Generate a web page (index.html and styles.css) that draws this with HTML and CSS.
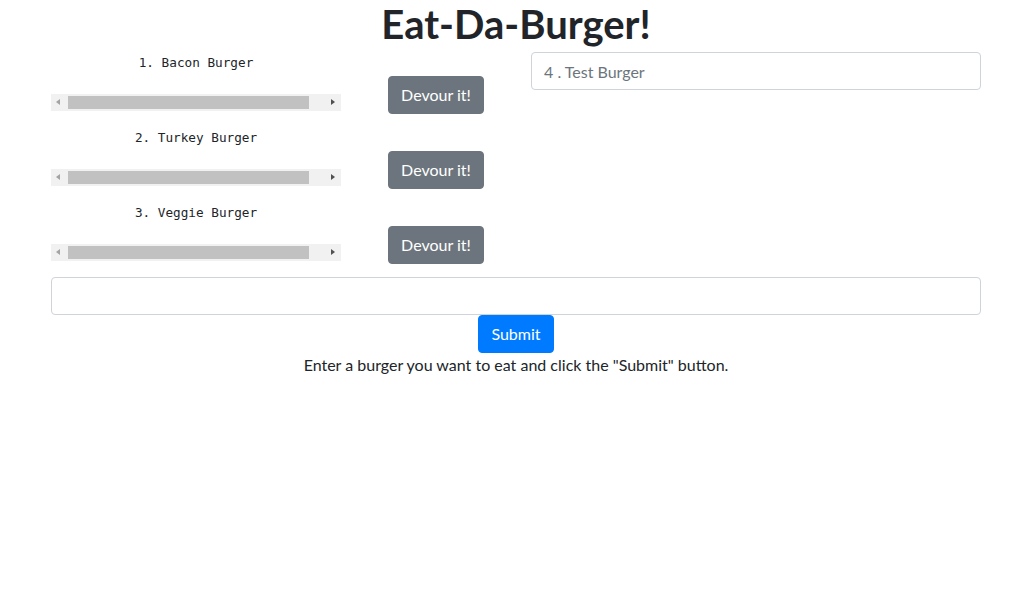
FILE: index.html
```html
<!DOCTYPE html>
<html lang="en">
<head>
<meta charset="utf-8">
<title>Eat-Da-Burger!</title>
<link rel="stylesheet" href="styles.css">
</head>
<body>
<div class="container">
  <h1 class="title">Eat-Da-Burger!</h1>
  <div class="row">
    <div class="col">
      <ul class="burger-list">
        <li class="burger-item">
          <div class="burger-pre">
            <pre class="burger-name">1. Bacon Burger</pre>
            <div class="hscroll"><span class="arrow arrow-left"></span><span class="thumb"></span><span class="arrow arrow-right"></span></div>
          </div>
          <button class="btn btn-devour" type="button">Devour it!</button>
        </li>
        <li class="burger-item">
          <div class="burger-pre">
            <pre class="burger-name">2. Turkey Burger</pre>
            <div class="hscroll"><span class="arrow arrow-left"></span><span class="thumb"></span><span class="arrow arrow-right"></span></div>
          </div>
          <button class="btn btn-devour" type="button">Devour it!</button>
        </li>
        <li class="burger-item">
          <div class="burger-pre">
            <pre class="burger-name">3. Veggie Burger</pre>
            <div class="hscroll"><span class="arrow arrow-left"></span><span class="thumb"></span><span class="arrow arrow-right"></span></div>
          </div>
          <button class="btn btn-devour" type="button">Devour it!</button>
        </li>
      </ul>
    </div>
    <div class="col">
      <input class="form-control" type="text" placeholder="4 . Test Burger">
    </div>
  </div>
  <form class="add-form">
    <input class="form-control" type="text">
    <button class="btn btn-submit" type="button">Submit</button>
    <p class="hint">Enter a burger you want to eat and click the "Submit" button.</p>
  </form>
</div>
</body>
</html>
```

FILE: styles.css
```css
* { box-sizing: border-box; }
html, body { margin: 0; padding: 0; background: #fff; }
body {
  font-family: Lato, "Noto Sans", sans-serif;
  font-size: 16px;
  line-height: 1.5;
  color: #212529;
}
.container {
  width: 960px;
  margin: 0 0 0 calc(50% - 479px);
  padding: 0 15px;
}
.title {
  margin: 0 0 4px;
  font-size: 40px;
  font-weight: 700;
  line-height: 48px;
  text-align: center;
}
.row {
  display: grid;
  grid-template-columns: 450px 450px;
  column-gap: 30px;
}
.burger-list { list-style: none; margin: 0; padding: 0; }
.burger-item {
  display: flex;
  align-items: flex-start;
  height: 59px;
  margin-bottom: 16px;
}
.burger-pre {
  width: 290px;
  height: 59px;
  display: flex;
  flex-direction: column;
}
.burger-name {
  margin: 0;
  font-family: "DejaVu Sans Mono", "Liberation Mono", monospace;
  font-size: 12.7px;
  line-height: 21px;
  text-align: center;
  color: #212529;
}
.hscroll {
  margin-top: auto;
  height: 17px;
  background: #f1f1f1;
  position: relative;
}
.thumb {
  position: absolute;
  left: 17px;
  right: 32px;
  top: 2px;
  bottom: 2px;
  background: #c1c1c1;
}
.arrow {
  position: absolute;
  top: 5px;
  width: 0;
  height: 0;
  border-top: 3.5px solid transparent;
  border-bottom: 3.5px solid transparent;
}
.arrow-left { left: 5px; border-right: 4px solid #a3a3a3; }
.arrow-right { right: 6px; border-left: 4px solid #505050; }
.btn {
  display: inline-block;
  font-family: inherit;
  font-size: 16px;
  line-height: 24px;
  padding: 6px 12px;
  border: 1px solid transparent;
  border-radius: 4px;
  color: #fff;
  cursor: pointer;
}
.btn-devour {
  margin: 24px 0 0 47px;
  width: 96px;
  height: 38px;
  flex-shrink: 0;
  background: #6c757d;
  border-color: #6c757d;
}
.form-control {
  display: block;
  width: 100%;
  height: 38px;
  padding: 6px 12px;
  font-family: inherit;
  font-size: 16px;
  line-height: 24px;
  color: #495057;
  background: #fff;
  border: 1px solid #ced4da;
  border-radius: 4px;
}
.form-control::placeholder { color: #6c757d; opacity: 1; }
.add-form {
  display: flex;
  flex-direction: column;
  align-items: center;
}
.btn-submit {
  width: 76px;
  height: 38px;
  background: #007bff;
  border-color: #007bff;
}
.hint { margin: 0; text-align: center; }
```
